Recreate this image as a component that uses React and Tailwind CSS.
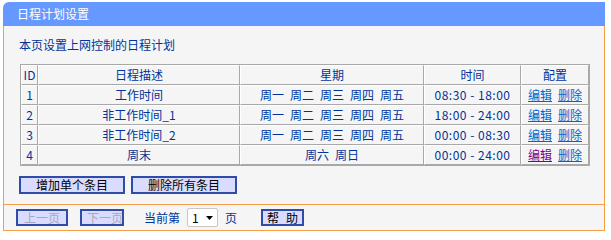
import React from "react";

const WEEKDAYS = ["周一", "周二", "周三", "周四", "周五"];

const rows = [
  { id: 1, desc: "工作时间", days: WEEKDAYS, time: "08:30 - 18:00" },
  { id: 2, desc: "非工作时间_1", days: WEEKDAYS, time: "18:00 - 24:00" },
  { id: 3, desc: "非工作时间_2", days: WEEKDAYS, time: "00:00 - 08:30" },
  { id: 4, desc: "周末", days: ["周六", "周日"], time: "00:00 - 24:00", visited: true },
];

// inset-looking cell: light top/left, gray bottom/right
const cell =
  "border border-t-white border-l-white border-r-[#a8a8a8] border-b-[#a8a8a8] p-0 leading-[18px] text-center font-normal";

const PageButton = ({ children, className = "", disabled }) => (
  <button
    type="button"
    disabled={disabled}
    className={`h-[17px] border-2 border-[#2f4ca8] bg-[#d9dcff] text-[12px] leading-none overflow-hidden whitespace-nowrap ${
      disabled ? "text-[#a8a8b8]" : "text-black"
    } ${className}`}
  >
    {children}
  </button>
);

export default function App() {
  return (
    <div className="min-h-[234px] bg-white pt-[2px] pl-[3px] font-['Noto_Sans_CJK_SC',sans-serif] text-[12px] text-[#003399]">
      <div className="w-[602px]">
        {/* title bar */}
        <div className="h-[24px] rounded-tl-[6px] bg-[#6699ff] pl-[14px] text-[12px] leading-[24px] text-white">
          日程计划设置
        </div>

        {/* body */}
        <div className="h-[179px] border-x border-b border-[#f5a048] bg-[#f5f5f5] pl-[15px] pt-[11px]">
          <p className="leading-[16px]">本页设置上网控制的日程计划</p>

          <table className="mt-[11px] ml-[1px] w-[570px] table-fixed border-separate border-spacing-0 border border-[#a8a8a8]">
            <thead>
              <tr>
                <th className={`${cell} w-[17px]`}>ID</th>
                <th className={`${cell} w-[202px]`}>日程描述</th>
                <th className={`${cell} w-[184px]`}>星期</th>
                <th className={`${cell} w-[97px]`}>时间</th>
                <th className={`${cell} w-[68px]`}>配置</th>
              </tr>
            </thead>
            <tbody>
              {rows.map((r) => (
                <tr key={r.id}>
                  <td className={cell}>{r.id}</td>
                  <td className={cell}>{r.desc}</td>
                  <td className={cell}>
                    <span className="inline-flex gap-[6px]">
                      {r.days.map((d) => (
                        <span key={d}>{d}</span>
                      ))}
                    </span>
                  </td>
                  <td className={`${cell} tracking-[0.5px]`}>{r.time}</td>
                  <td className={cell}>
                    <span className="inline-flex gap-[6px]">
                      <a href="#" className={`underline ${r.visited ? "text-[#800080]" : "text-[#0066cc]"}`}>
                        编辑
                      </a>
                      <a href="#" className="underline text-[#0066cc]">
                        删除
                      </a>
                    </span>
                  </td>
                </tr>
              ))}
            </tbody>
          </table>

          <div className="mt-[10px] flex gap-[6px]">
            <button type="button" className="h-[18px] w-[106px] border-2 border-[#2f4ca8] bg-[#d9dcff] text-[12px] leading-none text-black">
              增加单个条目
            </button>
            <button type="button" className="h-[18px] w-[106px] border-2 border-[#2f4ca8] bg-[#d9dcff] text-[12px] leading-none text-black">
              删除所有条目
            </button>
          </div>
        </div>

        {/* footer / pager */}
        <div className="flex h-[26px] items-center border-x border-b border-[#f5a048] bg-[#f5f5f5] pl-[12px]">
          <PageButton disabled className="w-[52px]">
            上一页
          </PageButton>
          <PageButton disabled className="ml-[12px] w-[44px] pl-[5px] text-left">
            下一页
          </PageButton>
          <span className="ml-[20px] leading-[16px]">当前第</span>
          <div className="ml-[7px] flex h-[19px] w-[31px] items-center justify-between rounded-[2px] border border-[#c8c8c8] bg-white pl-[4px] pr-[4px] text-black">
            <span className="leading-none">1</span>
            <svg width="7" height="4" viewBox="0 0 7 4">
              <polygon points="0,0 7,0 3.5,4" fill="#000" />
            </svg>
          </div>
          <span className="ml-[7px] leading-[16px]">页</span>
          <PageButton className="ml-[24px] h-[16px] w-[43px]">
            <span className="inline-flex gap-[7px]">
              <span>帮</span>
              <span>助</span>
            </span>
          </PageButton>
        </div>
      </div>
    </div>
  );
}
